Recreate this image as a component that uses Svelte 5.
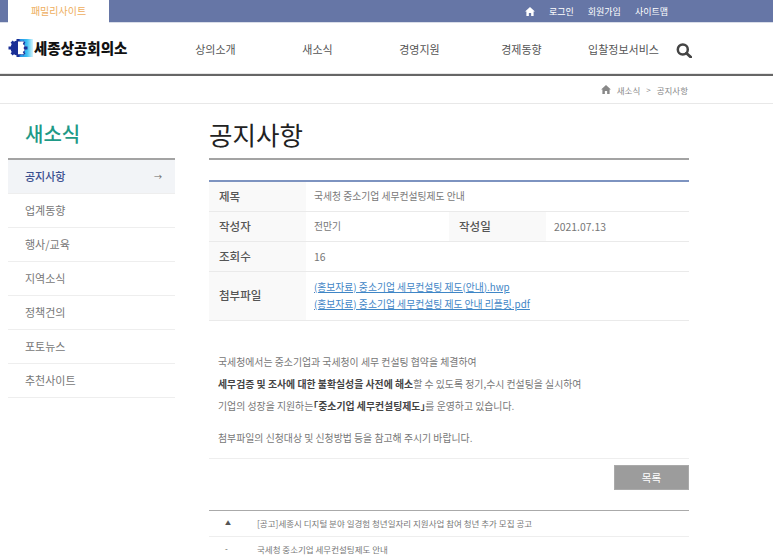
<script>
  const nav = ['상의소개', '새소식', '경영지원', '경제동향', '입찰정보서비스'];
  const side = ['공지사항', '업계동향', '행사/교육', '지역소식', '정책건의', '포토뉴스', '추천사이트'];
</script>

<div class="page">
  <div class="topbar">
    <div class="tab">패밀리사이트</div>
    <div class="util">
      <svg viewBox="0 0 12 11" width="10" height="9"><path d="M6 0 0 5.400h1.600V11h3V7.400h2.800V11h3V5.400H12z" fill="#fff"/></svg>
      <span>로그인</span><span>회원가입</span><span>사이트맵</span>
    </div>
  </div>

  <header>
    <div class="logo">
      <svg viewBox="0 0 25 18" width="25" height="18">
        <defs><linearGradient id="lg" x1="0" x2="1" y1="0" y2="0"><stop offset="0" stop-color="#1a7fe0"/><stop offset=".6" stop-color="#3cc0f2"/><stop offset="1" stop-color="#d5f3fc"/></linearGradient></defs>
        <rect x="10" y="0" width="15" height="18" fill="url(#lg)"/>
        <circle cx="10" cy="9" r="7.500" fill="#1a2f96"/>
        <g stroke="#1a2f96" stroke-width="3">
          <path d="M10 0v18M3.600 2.600l12.800 12.800M3.600 15.400 16.400 2.600M0.500 9h19"/>
        </g>
        <path d="M10 2.500h6l-1.200 2.500 2 1.800-1.300 2.200 1.300 2.200-2 1.800 1.200 2.300h-6z" fill="#fff"/>
      </svg>
      <span>세종상공회의소</span>
    </div>
    <nav>
      {#each nav as n}<span>{n}</span>{/each}
    </nav>
    <svg class="search" viewBox="0 0 16 15" width="16" height="15"><circle cx="6.800" cy="6.500" r="5" fill="none" stroke="#444" stroke-width="2.500"/><path d="m10.500 10.300 4.200 3.800" stroke="#444" stroke-width="2.800" stroke-linecap="round"/></svg>
  </header>

  <div class="crumb">
    <svg viewBox="0 0 12 11" width="10" height="9"><path d="M6 0 0 5.400h1.600V11h3V7.400h2.800V11h3V5.400H12z" fill="#888"/></svg>
    <span>새소식</span><span class="gt">&gt;</span><span>공지사항</span>
  </div>

  <div class="body">
    <aside>
      <h2>새소식</h2>
      <ul>
        {#each side as s, i}
          <li class:on={i === 0}>{s}{#if i === 0}<span class="arrow">→</span>{/if}</li>
        {/each}
      </ul>
    </aside>

    <main>
      <h1>공지사항</h1>
      <div class="table">
        <div class="row r30"><div class="th">제목</div><div class="td">국세청 중소기업 세무컨설팅제도 안내</div></div>
        <div class="row r30"><div class="th">작성자</div><div class="td w143">전만기</div><div class="th">작성일</div><div class="td num">2021.07.13</div></div>
        <div class="row r30"><div class="th">조회수</div><div class="td num">16</div></div>
        <div class="row r49"><div class="th">첨부파일</div><div class="td files"><a href="#a">(홍보자료) 중소기업 세무컨설팅 제도(안내).hwp</a><a href="#b">(홍보자료) 중소기업 세무컨설팅 제도 안내 리플릿.pdf</a></div></div>
      </div>

      <div class="text">
        <p>국세청에서는 중소기업과 국세청이 세무 컨설팅 협약을 체결하여</p>
        <p><b>세무검증 및 조사에 대한 불확실성을 사전에 해소</b>할 수 있도록 정기,수시 컨설팅을 실시하여</p>
        <p>기업의 성장을 지원하는<b>｢중소기업 세무컨설팅제도｣</b>를 운영하고 있습니다.</p>
        <p class="gap">첨부파일의 신청대상 및 신청방법 등을 참고해 주시기 바랍니다.</p>
      </div>

      <div class="btnrow"><button>목록</button></div>

      <div class="prevnext">
        <div class="pn"><span class="mark tri">▲</span><span>[공고]세종시 디지털 분야 일경험 청년일자리 지원사업 참여 청년 추가 모집 공고</span></div>
        <div class="pn"><span class="mark">-</span><span>국세청 중소기업 세무컨설팅제도 안내</span></div>
      </div>
    </main>
  </div>
</div>

<style>
  :global(body) { margin: 0; background: #fff; }
  .page { width: 773px; height: 557px; overflow: hidden; font-family: "Noto Sans CJK KR", "Noto Sans", sans-serif; color: #666; }
  .topbar { height: 22px; background: #6676a6; display: flex; justify-content: space-between; padding: 0 105px 0 8px; border-bottom: 1px solid #d9dde8; }
  .tab { width: 101px; height: 23px; background: #fff; color: #eeae5e; font-size: 10px; line-height: 22px; text-align: center; }
  .util { display: flex; align-items: center; color: #fff; font-size: 9px; gap: 14px; height: 22px; }
  header { height: 51px; display: flex; align-items: center; padding: 0 82px 0 8px; border-bottom: 2px solid #666; box-shadow: 0 -1px 0 #e6e6e6 inset; }
  .logo { display: flex; align-items: center; gap: 1px; width: 156.500px; flex: none; color: #111; font-size: 14.500px; font-weight: 900; margin-top: -2px; }
  nav { flex: none; width: 510px; display: grid; grid-template-columns: repeat(5, 1fr); justify-items: center; font-size: 11px; color: #555; }
  .search { flex: none; margin: 3px 0 0 1px; }
  .crumb { height: 27px; border-bottom: 1px solid #e8e8e8; display: flex; align-items: center; justify-content: flex-end; gap: 6px; padding-right: 85px; font-size: 8.500px; color: #888; }
  .gt { font-size: 8px; }
  .body { display: flex; padding-left: 8px; }
  aside { width: 167px; flex: none; }
  h2 { margin: 0; height: 54px; padding: 15px 0 0 17px; box-sizing: border-box; font-size: 20px; line-height: 30px; font-weight: 500; color: #1f9a87; }
  ul { list-style: none; margin: 0; padding: 0; border-top: 2px solid #a3a3a3; }
  li { height: 34px; box-sizing: border-box; border-bottom: 1px solid #eee; padding-left: 17px; font-size: 11px; line-height: 33px; color: #777; display: flex; justify-content: space-between; }
  li.on { background: #f2f4f7; color: #3a4f8f; font-weight: 500; }
  .arrow { margin-right: 13px; font-size: 8px; color: #666; font-weight: 400; }
  main { width: 480px; margin-left: 34px; }
  h1 { margin: 0; height: 56px; box-sizing: border-box; border-bottom: 2px solid #a3a3a3; padding-top: 13px; font-size: 25.500px; line-height: 33px; font-weight: 400; color: #222; }
  .table { margin-top: 20px; border-top: 2px solid #7d93c0; }
  .row { display: flex; border-bottom: 1px solid #eaeaea; box-sizing: border-box; }
  .r30 { height: 30px; }
  .r49 { height: 49px; }
  .th { width: 97px; flex: none; background: #f9f9f9; padding: 0 0 2px 10px; box-sizing: border-box; font-size: 11.500px; font-weight: 500; color: #555; display: flex; align-items: center; }
  .td { padding: 0 0 1px 8px; font-size: 9.800px; color: #777; display: flex; align-items: center; flex: 1; }
  .num { font-size: 10.400px; }
  .w143 { flex: none; width: 143px; box-sizing: border-box; }
  .files { flex-direction: column; align-items: flex-start; justify-content: center; gap: 2px; }
  .files a { color: #3f86c6; line-height: 15px; font-size: 9.800px; }
  .text { margin-top: 30px; height: 107px; border-bottom: 1px solid #eee; font-size: 9.900px; color: #777; }
  p { margin: 0 0 0 9px; height: 22px; line-height: 22px; white-space: nowrap; }
  p b { color: #444; font-weight: 700; }
  p.gap { margin-top: 10px; }
  .btnrow { display: flex; justify-content: flex-end; margin-top: 6px; }
  button { width: 75px; height: 25px; background: #9c9c9c; border: 1px solid #aaa; color: #fff; font: 400 10.500px "Noto Sans CJK KR", sans-serif; padding: 0; }
  .prevnext { margin-top: 20px; border-top: 1px solid #aaa; }
  .pn { height: 26px; display: flex; align-items: center; padding-bottom: 2px; box-sizing: border-box; border-bottom: 1px solid #eee; font-size: 8.500px; color: #777; }
  .mark { width: 48px; padding-left: 16px; box-sizing: border-box; flex: none; font-size: 8px; color: #555; }
  .tri { font-size: 6px; }
</style>
